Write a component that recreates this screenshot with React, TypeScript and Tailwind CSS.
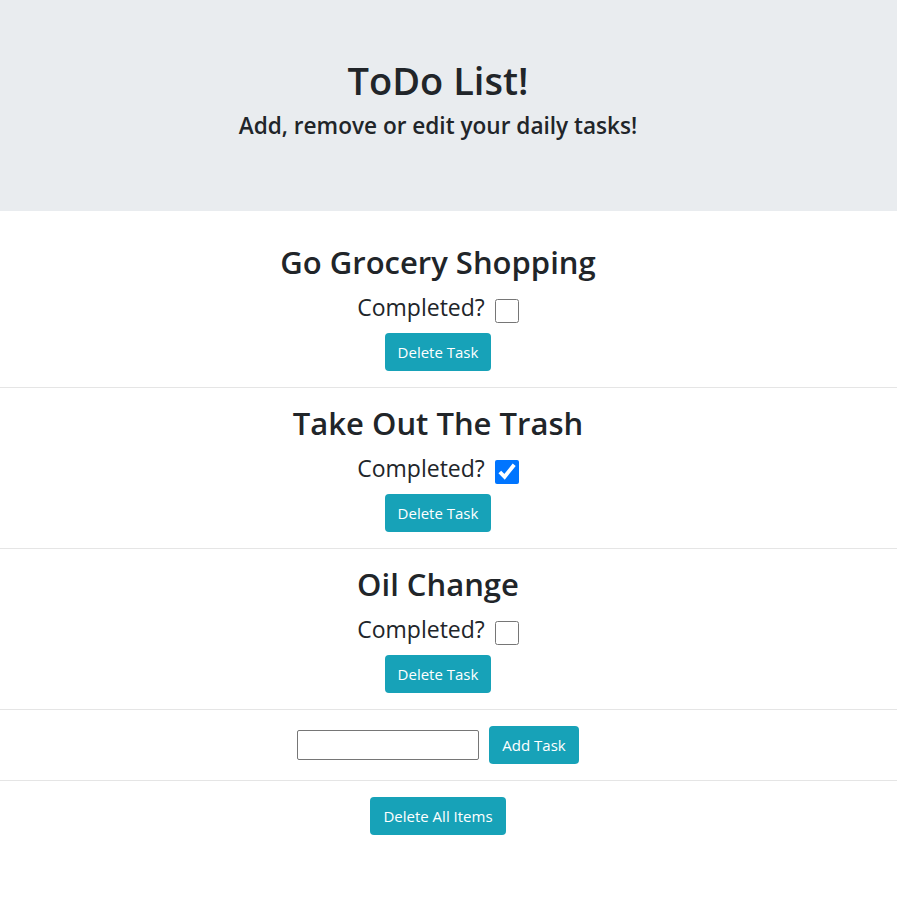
import { useState } from 'react';

type Task = { id: number; title: string; done: boolean };

const initialTasks: Task[] = [
  { id: 1, title: 'Go Grocery Shopping', done: false },
  { id: 2, title: 'Take Out The Trash', done: true },
  { id: 3, title: 'Oil Change', done: false },
];

const btn =
  'bg-[#17a2b8] text-white text-[15px] leading-6 px-3 py-1.5 rounded border border-transparent cursor-pointer';

export default function App() {
  const [tasks, setTasks] = useState<Task[]>(initialTasks);
  const [draft, setDraft] = useState('');

  const toggle = (id: number) =>
    setTasks((ts) => ts.map((t) => (t.id === id ? { ...t, done: !t.done } : t)));

  const remove = (id: number) => setTasks((ts) => ts.filter((t) => t.id !== id));

  const add = () => {
    if (!draft.trim()) return;
    setTasks((ts) => [...ts, { id: Date.now(), title: draft.trim(), done: false }]);
    setDraft('');
  };

  return (
    <div className="min-h-screen bg-white text-[#212529] font-['Open_Sans',sans-serif]">
      {/* Jumbotron */}
      <header className="bg-[#e9ecef] pt-[56px] pb-[62px] mb-8 text-center pr-[21px]">
        <h1 className="text-[38px] leading-[48px] font-semibold mb-2">ToDo List!</h1>
        <h4 className="text-[22.6px] leading-[28.8px] font-semibold mb-2">Add, remove or edit your daily tasks!</h4>
      </header>

      {/* Tasks */}
      {tasks.map((task, i) => (
        <div key={task.id}>
          {i > 0 && <hr className="border-t border-black/10 my-4" />}
          <div className="text-center pr-[21px]">
            <h2 className="text-[31px] leading-[38px] font-semibold mb-2">{task.title}</h2>
            <div className="flex items-center justify-center gap-[10px] text-[23px] leading-9 mb-2">
              <span>Completed?</span>
              <input
                type="checkbox"
                checked={task.done}
                onChange={() => toggle(task.id)}
                className="w-6 h-6 m-0 mt-[8px]"
              />
            </div>
            <button className={btn} onClick={() => remove(task.id)}>
              Delete Task
            </button>
          </div>
        </div>
      ))}

      <hr className="border-t border-black/10 my-4" />

      {/* Add task */}
      <div className="flex items-center justify-center gap-[10px] pr-[21px]">
        <input
          type="text"
          value={draft}
          onChange={(e) => setDraft(e.target.value)}
          className="w-[182px] h-[30px] border border-[#767676] rounded-[2px] px-1"
        />
        <button className={btn} onClick={add}>
          Add Task
        </button>
      </div>

      <hr className="border-t border-black/10 my-4" />

      <div className="text-center pr-[21px]">
        <button className={btn} onClick={() => setTasks([])}>
          Delete All Items
        </button>
      </div>
    </div>
  );
}
